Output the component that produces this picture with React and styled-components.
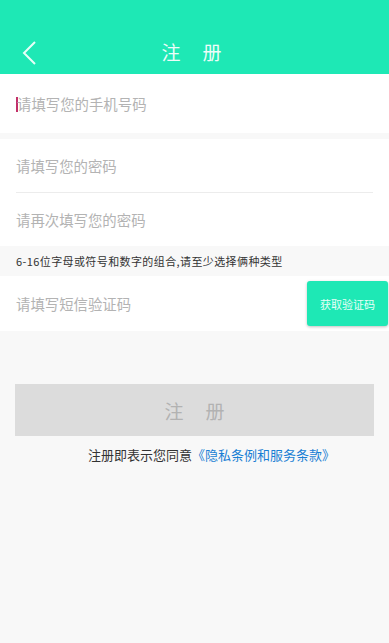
import React from 'react'
import styled, { createGlobalStyle } from 'styled-components'

const GlobalStyle = createGlobalStyle`
  html, body {
    margin: 0;
    padding: 0;
    background: #f8f8f8;
  }
  * { box-sizing: border-box; }
`

const Page = styled.div`
  width: 389px;
  min-height: 643px;
  background: #f8f8f8;
  font-family: "Noto Sans CJK SC", "Noto Sans", sans-serif;
`

const Header = styled.div`
  height: 74px;
  background: #1ee8b5;
  display: flex;
  align-items: flex-end;
  padding-bottom: 9px;
  position: relative;
`

const BackBtn = styled.div`
  position: absolute;
  left: 20px;
  top: 40px;
  width: 20px;
  height: 26px;
`

const Title = styled.div`
  flex: 1;
  text-align: center;
  color: #ffffff;
  font-size: 19px;
  letter-spacing: 22px;
  padding-left: 22px;
  margin-right: 6px;
  line-height: 26px;
  opacity: 0.92;
`

const Group = styled.div`
  background: #ffffff;
  margin-top: ${p => p.gap || 0}px;
`

const Row = styled.div`
  height: ${p => p.h || 53}px;
  display: flex;
  align-items: center;
  padding-left: 16px;
  position: relative;
`

const Divider = styled.div`
  height: 1px;
  background: #ececec;
  margin: 0 16px 0 16px;
`

const Placeholder = styled.span`
  color: #b3b3b3;
  font-size: 14.4px;
  flex: 1;
`

const Caret = styled.span`
  display: inline-block;
  width: 2px;
  height: 15px;
  background: #c2306a;
  margin-right: -1px;
  vertical-align: -2px;
`

const Hint = styled.div`
  height: 30px;
  display: flex;
  align-items: center;
  padding-left: 16px;
  font-size: 11px;
  letter-spacing: 0.4px;
  color: #333333;
`

const CodeBtn = styled.button`
  width: 81px;
  height: 45px;
  margin-right: 1px;
  border: none;
  border-radius: 3px;
  background: #1ee8b5;
  color: #e8fff8;
  font-family: inherit;
  font-size: 11px;
  box-shadow: 0 1px 3px rgba(0, 0, 0, 0.25);
`

const Submit = styled.div`
  margin: 53px 15px 0 15px;
  height: 52px;
  background: #dcdcdc;
  color: #b2b2b2;
  font-size: 19px;
  letter-spacing: 22px;
  padding-left: 22px;
  display: flex;
  align-items: center;
  justify-content: center;
`

const Agree = styled.div`
  margin-top: 9px;
  text-align: center;
  font-size: 13px;
  color: #333333;
  padding-left: 34px;
`

const Link = styled.span`
  color: #1a7fd4;
`

export default function App() {
  return (
    <Page>
      <GlobalStyle />
      <Header>
        <BackBtn>
          <svg width="20" height="26" viewBox="0 0 20 26">
            <path d="M15 2 L4 13 L15 24" fill="none" stroke="#e6fff7" strokeWidth="2" />
          </svg>
        </BackBtn>
        <Title>注册</Title>
      </Header>

      <Group>
        <Row h={59}>
          <Placeholder><Caret />请填写您的手机号码</Placeholder>
        </Row>
      </Group>

      <Group gap={6}>
        <Row h={53}>
          <Placeholder>请填写您的密码</Placeholder>
        </Row>
        <Divider />
        <Row h={53}>
          <Placeholder>请再次填写您的密码</Placeholder>
        </Row>
      </Group>

      <Hint>6-16位字母或符号和数字的组合,请至少选择俩种类型</Hint>

      <Group>
        <Row h={55}>
          <Placeholder>请填写短信验证码</Placeholder>
          <CodeBtn>获取验证码</CodeBtn>
        </Row>
      </Group>

      <Submit>注册</Submit>

      <Agree>
        注册即表示您同意<Link>《隐私条例和服务条款》</Link>
      </Agree>
    </Page>
  )
}
